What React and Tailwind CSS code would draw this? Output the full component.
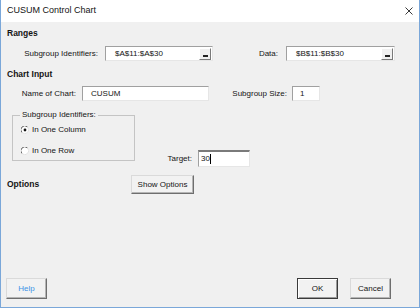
import React from 'react'

// ── Campos ────────────────────────────────────────────────────
function RangeField({ className, value }) {
  return (
    <div className={`flex items-center h-[15px] bg-white border border-[#e6e6e6] border-t-[#a0a0a0] border-l-[#a0a0a0] ${className}`}>
      <span className="pl-[9px]">{value}</span>
      <div className="ml-auto mr-px h-[12px] w-[12px] flex items-end justify-center pb-[2px] bg-[#f0f0f0] border border-white border-r-[#7a7a7a] border-b-[#7a7a7a]">
        <div className="h-[2px] w-[5px] bg-[#222]" />
      </div>
    </div>
  )
}

function TextField({ className, value, pad = 'pl-[8px]' }) {
  return (
    <div className={`flex items-center h-[15px] bg-white border border-[#e6e6e6] border-t-[#a0a0a0] border-l-[#a0a0a0] ${className}`}>
      <span className={pad}>{value}</span>
    </div>
  )
}

function Radio({ checked, label, className }) {
  return (
    <div className={`flex items-center h-[12px] ${className}`}>
      <svg width="8" height="8" viewBox="0 0 8 8" className="ml-[8px]">
        <circle cx="4" cy="4" r="3.5" fill="#fff" />
        <path d="M1 6.5 A3.5 3.5 0 0 1 6.5 1" stroke="#6a6a6a" strokeWidth="1" fill="none" />
        <path d="M6.5 1 A3.5 3.5 0 0 1 1 6.5" stroke="#e2e2e2" strokeWidth="1" fill="none" />
        {checked && <circle cx="4" cy="4" r="1.4" fill="#111" />}
      </svg>
      <span className="ml-[3px]">{label}</span>
    </div>
  )
}

function WinButton({ className, children, primary }) {
  return (
    <div
      className={`flex items-center justify-center bg-[#f2f2f2] border ${
        primary
          ? 'border-[#3a3a3a] shadow-[inset_1px_1px_0_#fff,inset_-1px_-1px_0_#9a9a9a]'
          : 'border-[#dadada] border-r-[#6e6e6e] border-b-[#6e6e6e] shadow-[inset_-1px_-1px_0_#b5b5b5]'
      } ${className}`}
    >
      {children}
    </div>
  )
}

// ── Diálogo ───────────────────────────────────────────────────
export default function App() {
  return (
    <div className="w-[420px] h-[308px] flex flex-col border-x border-b border-[#7aa7d9] bg-[#f0f0f0] text-[8px] text-[#141414] font-['Liberation_Sans',Arial,sans-serif] overflow-hidden">

      {/* Barra de título */}
      <div className="h-[22px] shrink-0 bg-white flex items-center justify-between pl-[6px] pr-[6px]">
        <span className="text-[9px]">CUSUM Control Chart</span>
        <svg width="8" height="8" viewBox="0 0 8 8">
          <path d="M0.5 0.5L7.5 7.5M7.5 0.5L0.5 7.5" stroke="#222" strokeWidth="0.9" />
        </svg>
      </div>

      <div className="flex-1 flex flex-col pl-[6px]">
        <div className="mt-[5px] h-[12px] leading-[12px] font-bold text-[8.5px]">Ranges</div>

        <div className="mt-[7px] flex items-center h-[15px]">
          <span className="w-[91px] text-right">Subgroup Identifiers:</span>
          <RangeField className="ml-[7px] w-[108px]" value="$A$11:$A$30" />
          <span className="w-[65px] text-right">Data:</span>
          <RangeField className="ml-[8px] w-[109px]" value="$B$11:$B$30" />
        </div>

        <div className="mt-[7px] h-[12px] leading-[12px] font-bold text-[8.5px]">Chart Input</div>

        <div className="mt-[6px] flex items-center h-[15px]">
          <span className="w-[69px] text-right">Name of Chart:</span>
          <TextField className="ml-[6px] w-[127px]" value="CUSUM" />
          <span className="w-[78px] text-right">Subgroup Size:</span>
          <TextField className="ml-[5px] w-[28px]" value="1" pad="pl-[7px]" />
        </div>

        <div className="mt-[8px] flex items-start">
          <fieldset className="ml-[5px] w-[123px] border border-[#c4c4c4] pb-[3px]">
            <legend className="ml-[7px] px-[2px] h-[12px] leading-[12px]">Subgroup Identifiers:</legend>
            <Radio className="mt-[3px]" checked label="In One Column" />
            <Radio className="mt-[9px]" label="In One Row" />
          </fieldset>

          <div className="mt-[41px] flex items-center h-[17px]">
            <span className="w-[57px] text-right">Target:</span>
            <div className="ml-[6px] w-[52px] h-[17px] flex items-center bg-white border border-[#e6e6e6] border-t-2 border-t-[#7a7a7a] border-l-[#a0a0a0]">
              <span className="pl-[2px]">30</span>
              <div className="w-px h-[10px] bg-black" />
            </div>
          </div>
        </div>

        <div className="mt-[8px] flex items-center h-[19px]">
          <span className="w-[124px] font-bold text-[8.5px]">Options</span>
          <WinButton className="w-[63px] h-[19px]">Show Options</WinButton>
        </div>

        <div className="mt-auto mb-[8px] -ml-px pr-[28px] flex items-center justify-between h-[21px]">
          <WinButton className="w-[41px] h-[21px] text-[#4192e6]">Help</WinButton>
          <div className="flex gap-[12px]">
            <WinButton primary className="w-[41px] h-[21px]">OK</WinButton>
            <WinButton className="w-[41px] h-[21px]">Cancel</WinButton>
          </div>
        </div>
      </div>
    </div>
  )
}
